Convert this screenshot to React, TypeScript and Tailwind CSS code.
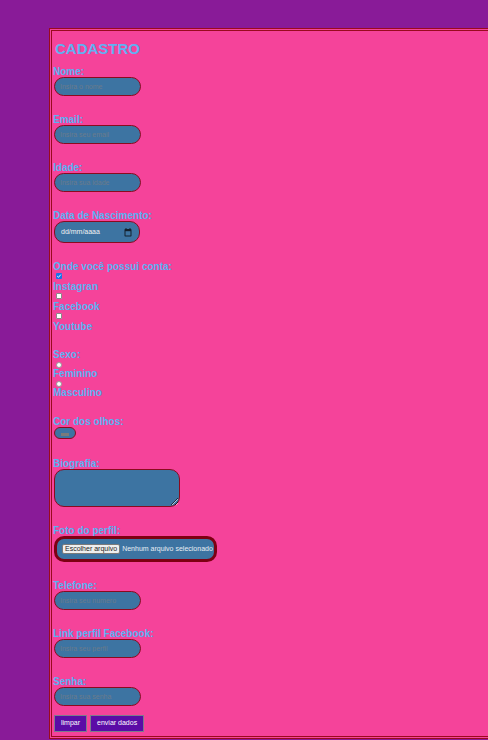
import React from 'react'

const labelCls = 'block pl-px text-[10px] leading-[11px] font-bold text-[#5ab2f4]'
const inputCls =
  'ml-[2px] block w-[87px] h-[19px] rounded-[10px] border border-[#8b0a1e] bg-[#3d74a2] px-[5px] text-[7px] text-white outline-none placeholder:text-[#6b7b8b]'

function TextField({ label, placeholder, type = 'text' }: { label: string; placeholder: string; type?: string }) {
  return (
    <div className="mb-[18px]">
      <label className={labelCls}>{label}</label>
      <input type={type} placeholder={placeholder} className={inputCls} />
    </div>
  )
}

function Check({ checked }: { checked?: boolean }) {
  return (
    <div className="h-[9px] pt-px pl-[4px]">
      {checked ? (
        <svg width="6" height="6" viewBox="0 0 6 6" className="block">
          <rect width="6" height="6" rx="1" fill="#1a73e8" />
          <path d="M1.2 3.1 L2.5 4.3 L4.8 1.6" stroke="#fff" strokeWidth="0.9" fill="none" />
        </svg>
      ) : (
        <div className="w-[6px] h-[6px] rounded-[1px] border border-[#8a8a8a] bg-white" />
      )}
    </div>
  )
}

function Radio() {
  return (
    <div className="h-[8px] pt-[2px] pl-[4px]">
      <div className="w-[6px] h-[6px] rounded-full border border-[#9a9a9a] bg-white" />
    </div>
  )
}

export default function App() {
  return (
    <div
      className="w-[488px] h-[740px] overflow-hidden bg-[#891b98] pl-[49px] pt-[28px]"
      style={{ fontFamily: '"Liberation Sans", Arial, sans-serif' }}
    >
      <div className="w-[460px] border-[3px] border-double border-[#9a0a1e] bg-[#f5439a] pb-[4px]">
        <h1 className="mt-[9px] mb-[8px] pl-[3px] text-[15px] leading-[18px] font-bold text-[#62b0f2]">CADASTRO</h1>

        <TextField label="Nome:" placeholder="Insira o nome" />
        <TextField label="Email:" placeholder="Insira seu email" type="email" />
        <TextField label="Idade:" placeholder="Insira sua idade" />

        {/* Data de nascimento */}
        <div className="mb-[18px]">
          <label className={labelCls}>Data de Nascimento:</label>
          <div className="ml-[2px] flex items-center justify-between w-[86px] h-[22px] rounded-[10px] border border-[#8b0a1e] bg-[#3d74a2] pl-[6px] pr-[7px]">
            <span className="text-[7px] text-[#f2f2f2]">dd/mm/aaaa</span>
            <svg width="8" height="9" viewBox="0 0 8 9" className="block">
              <rect x="0.5" y="1" width="7" height="7.5" rx="0.8" fill="#14202c" />
              <rect x="1.5" y="3.2" width="5" height="4.3" fill="#3d74a2" />
              <rect x="1.5" y="0" width="1" height="1.5" fill="#14202c" />
              <rect x="5.5" y="0" width="1" height="1.5" fill="#14202c" />
            </svg>
          </div>
        </div>

        {/* Contas */}
        <div className="mb-[17px]">
          <label className={labelCls}>Onde você possui conta:</label>
          <Check checked />
          <span className={labelCls}>Instagran</span>
          <Check />
          <span className={labelCls}>Facebook</span>
          <Check />
          <span className={labelCls}>Youtube</span>
        </div>

        {/* Sexo */}
        <div className="mb-[18px]">
          <label className={labelCls + ' pl-[2px]'}>Sexo:</label>
          <Radio />
          <span className={labelCls}>Feminino</span>
          <Radio />
          <span className={labelCls}>Masculino</span>
        </div>

        {/* Cor dos olhos */}
        <div className="mb-[19px]">
          <label className={labelCls}>Cor dos olhos:</label>
          <div className="ml-[2px] flex items-end justify-center w-[22px] h-[12px] rounded-full border border-[#8b0a1e] bg-[#3d74a2] pb-[2px]">
            <div className="w-[8px] h-[3px] bg-[#7a7a7a]" />
          </div>
        </div>

        {/* Biografia */}
        <div className="mb-[18px]">
          <label className={labelCls}>Biografia:</label>
          <textarea className="ml-[2px] block w-[126px] h-[38px] rounded-[10px] border border-[#8b0a1e] bg-[#3d74a2] outline-none" />
        </div>

        {/* Foto */}
        <div className="mb-[18px]">
          <label className={labelCls}>Foto do perfil:</label>
          <div className="ml-[2px] flex items-center w-[163px] h-[26px] rounded-[10px] border-[3px] border-[#7d0012] bg-[#3d74a2] pl-[5px]">
            <span className="h-[10px] rounded-[2px] border border-[#7a7a7a] bg-[#efefef] px-[2px] text-[7px] leading-[8px] text-[#222]">
              Escolher arquivo
            </span>
            <span className="ml-[2px] text-[7px] text-[#e8eef4]">Nenhum arquivo selecionado</span>
          </div>
        </div>

        <TextField label="Telefone:" placeholder="Insira seu numero" />
        <TextField label="Link perfil Facebook:" placeholder="Insira seu perfil" />
        <div>
          <label className={labelCls}>Senha:</label>
          <input type="password" placeholder="Insira sua senha" className={inputCls} />
        </div>

        <div className="mt-[9px] ml-[2px] flex gap-[3px]">
          <button className="h-[17px] px-[6px] border border-[#7c7c8c] bg-[#5b0ca6] text-[7px] text-white">limpar</button>
          <button className="h-[17px] px-[6px] border border-[#7c7c8c] bg-[#5b0ca6] text-[7px] text-white">enviar dados</button>
        </div>
      </div>
    </div>
  )
}
